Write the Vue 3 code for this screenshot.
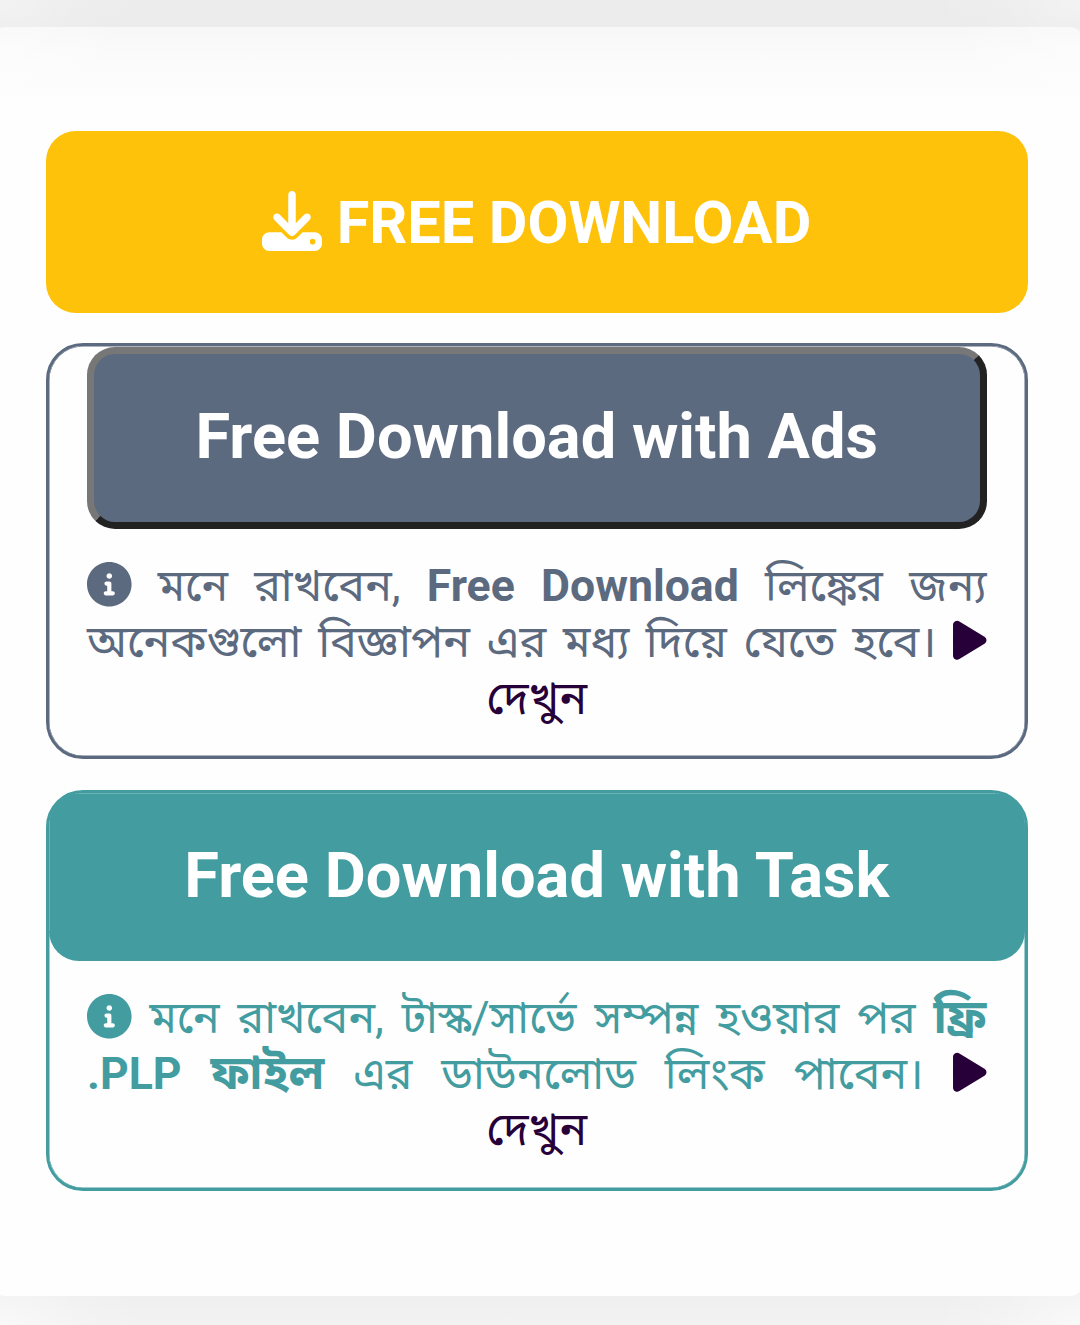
<script setup>
const paths = {
  download: 'M288 32c0-17.7-14.3-32-32-32s-32 14.3-32 32V274.7l-73.4-73.4c-12.5-12.5-32.8-12.5-45.3 0s-12.5 32.8 0 45.3l128 128c12.5 12.5 32.8 12.5 45.3 0l128-128c12.5-12.5 12.5-32.8 0-45.3s-32.8-12.5-45.3 0L288 274.7V32zM64 352c-35.3 0-64 28.7-64 64v32c0 35.3 28.7 64 64 64H448c35.3 0 64-28.7 64-64V416c0-35.3-28.7-64-64-64H346.5l-45.3 45.3c-25 25-65.5 25-90.5 0L165.5 352H64zm368 56a24 24 0 1 1 0 48 24 24 0 1 1 0-48z',
  info: 'M256 0C114.6 0 0 114.6 0 256s114.6 256 256 256s256-114.6 256-256S397.4 0 256 0zM256 128c17.67 0 32 14.33 32 32c0 17.67-14.33 32-32 32S224 177.7 224 160C224 142.3 238.3 128 256 128zM296 384h-80C202.8 384 192 373.3 192 360s10.75-24 24-24h16v-64H224c-13.25 0-24-10.75-24-24S210.8 224 224 224h32c13.25 0 24 10.75 24 24v88h16c13.25 0 24 10.75 24 24S309.3 384 296 384z',
  play: 'M361 215C375.3 223.8 384 239.3 384 256C384 272.7 375.3 288.2 361 296.1L73.03 472.1C58.21 482 39.66 482.4 24.52 473.9C9.377 465.4 0 449.4 0 432V80C0 62.64 9.377 46.63 24.52 38.13C39.66 29.64 58.21 29.99 73.03 39.04L361 215z'
}
</script>

<template>
  <main class="page">
    <section class="card">
      <a class="download">
        <svg class="dl" viewBox="0 0 512 512"><path :d="paths.download" fill="currentColor" /></svg>
        <span>FREE DOWNLOAD</span>
      </a>

      <div class="panel ads">
        <button class="action raised">Free Download with Ads</button>
        <div class="note">
          <p class="line"><svg class="info" viewBox="0 0 512 512"><path :d="paths.info" fill="currentColor" /></svg> মনে রাখবেন, <b>Free Download</b> লিঙ্কের জন্য</p>
          <p class="line second">অনেকগুলো বিজ্ঞাপন এর মধ্য দিয়ে যেতে হবে। <svg class="play" viewBox="0 0 384 512"><path :d="paths.play" fill="currentColor" /></svg></p>
          <p class="see">দেখুন</p>
        </div>
      </div>

      <div class="panel task">
        <a class="action flat">Free Download with Task</a>
        <div class="note">
          <p class="line"><svg class="info" viewBox="0 0 512 512"><path :d="paths.info" fill="currentColor" /></svg> মনে রাখবেন, টাস্ক/সার্ভে সম্পন্ন হওয়ার পর <b class="bn">ফ্রি</b></p>
          <p class="line"><b>.PLP <span class="bn">ফাইল</span></b> এর ডাউনলোড লিংক পাবেন। <svg class="play" viewBox="0 0 384 512"><path :d="paths.play" fill="currentColor" /></svg></p>
          <p class="see">দেখুন</p>
        </div>
      </div>
    </section>
  </main>
</template>

<style>
body { background: #fff; overflow: hidden; }
</style>

<style scoped>
.page {
  height: 1325px;
  box-sizing: border-box;
  padding-top: 27px;
  overflow: hidden;
  font-family: Roboto, "Noto Sans Bengali", "Noto Sans", sans-serif;
  background:
    radial-gradient(ellipse 150px 90px at 0 0, rgba(255,255,255,.35), rgba(255,255,255,.1) 55%, transparent) no-repeat,
    radial-gradient(ellipse 150px 90px at 100% 0, rgba(255,255,255,.35), rgba(255,255,255,.1) 55%, transparent) no-repeat,
    radial-gradient(ellipse 150px 90px at 0 100%, rgba(255,255,255,.55), rgba(255,255,255,.15) 55%, transparent) no-repeat,
    radial-gradient(ellipse 150px 90px at 100% 100%, rgba(255,255,255,.55), rgba(255,255,255,.15) 55%, transparent) no-repeat,
    linear-gradient(#ececec 0, #ebebeb 27px, #ebebeb 1290px, #efefef 1296px, #f2f2f2 1325px);
}
.card {
  height: 1268.5px;
  box-sizing: border-box;
  margin: 0 -3px 0 -8px;
  padding: 104px 55.5px 0 54px;
  border-radius: 13px;
  background:
    radial-gradient(ellipse 150px 110px at 0 20px, rgba(255,255,255,.4), rgba(255,255,255,.15) 55%, transparent) no-repeat,
    radial-gradient(ellipse 150px 110px at 100% 20px, rgba(255,255,255,.4), rgba(255,255,255,.15) 55%, transparent) no-repeat,
    linear-gradient(#f7f7f7 0, #fafafa 24px, #fcfcfc 48px, #fefefe 80px, #fefefe 100%);
}
.download {
  height: 182px;
  border-radius: 30px;
  background: #ffc20a;
  color: #fff;
  display: flex;
  align-items: center;
  justify-content: center;
  gap: 14.5px;
  font-weight: 700;
  font-size: 59.4px;
}
.download span { padding-top: 2px; }
.dl { width: 60px; height: 60px; margin-top: -3px; }
.panel { box-sizing: border-box; border: 3px solid; border-radius: 37px; box-shadow: inset 0 0 0 .5px; }
.ads { margin-top: 30px; height: 416px; color: #5c6a80; }
.task { margin-top: 31px; height: 401px; color: #439da0; }
.action {
  box-sizing: border-box;
  display: flex;
  align-items: center;
  justify-content: center;
  color: #fff;
  font: 700 63.2px Roboto, sans-serif;
}
.raised {
  width: 899.5px;
  height: 182px;
  margin: 1px 0 0 38px;
  padding: 0 0 5px;
  background: #5c6a80;
  border: 7px solid;
  border-color: #777 #222 #222 #777;
  border-radius: 28px;
}
.flat {
  height: 168px;
  padding-bottom: 4px;
  border-radius: 32px 32px 30px 30px;
  background:
    linear-gradient(#6cb3b5, #6cb3b5) 50% 0 / 916px 1px no-repeat,
    linear-gradient(#6cb3b5, #6cb3b5) 0 28px / 1px 110px no-repeat,
    #439da0;
}
.note { margin: 0 38px; font-size: 44.6px; }
.ads .note { padding-top: 29px; }
.task .note { padding-top: 29px; }
.line, .see { margin: 0; height: 56px; line-height: 56px; white-space: nowrap; }
.task .line { height: 55.6px; }
.line { text-align: justify; text-align-last: justify; }
.second { font-size: 44.9px; }
.see { text-align: center; font-size: 46.3px; color: #270039; }
.bn { font-size: 47px; line-height: 1; }
.info { width: 44.6px; height: 44.6px; vertical-align: -5.6px; }
.play { width: 33.5px; height: 44.6px; vertical-align: -5.6px; color: #270039; }
</style>
